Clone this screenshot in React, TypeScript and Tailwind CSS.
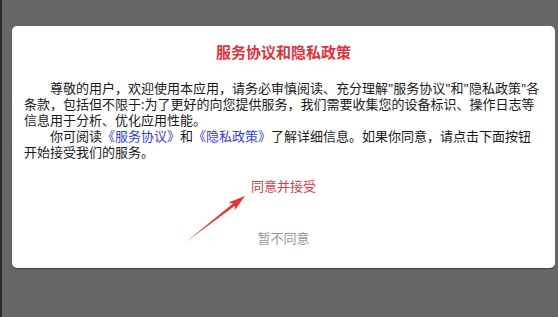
import React from "react";

export default function App() {
  const font = { fontFamily: '"Noto Sans", "Noto Sans CJK SC", sans-serif' };
  return (
    <div
      className="relative w-[558px] h-[317px] bg-[#666666] border-l-2 border-[#2a2a2a] pt-[26px] pl-[10px]"
      style={font}
    >
      <div className="w-[543px] h-[242px] bg-white rounded-[5px] shadow-[0_1px_1px_rgba(0,0,0,0.35)] flex flex-col items-center">
        <div className="pt-[16px] h-[36px] text-[15px] leading-[20px] font-bold text-[#e0323c]">
          服务协议和隐私政策
        </div>
        <div className="self-start mt-[18px] ml-[12px] w-[516px] text-[13px] leading-[16px] text-[#1a1a1a]">
          <p className="indent-[26px]">
            尊敬的用户，欢迎使用本应用，请务必审慎阅读、充分理解"服务协议"和"隐私政策"各条款，包括但不限于:为了更好的向您提供服务，我们需要收集您的设备标识、操作日志等信息用于分析、优化应用性能。
          </p>
          <p className="indent-[26px]">
            你可阅读<span className="text-[#3540d8]">《服务协议》</span>和<span className="text-[#3540d8]">《隐私政策》</span>了解详细信息。如果你同意，请点击下面按钮开始接受我们的服务。
          </p>
        </div>
        <button className="mt-[16px] h-[20px] text-[13px] leading-[20px] text-[#e33a3f]">
          同意并接受
        </button>
        <button className="mt-[32px] h-[20px] text-[13px] leading-[20px] text-[#9a9a9a]">
          暂不同意
        </button>
      </div>
      <svg
        className="absolute left-0 top-0 pointer-events-none"
        width="558"
        height="317"
        viewBox="0 0 558 317"
      >
        <polygon
          points="184,242 232.9,205.8 232.7,210.3 243,196 226.5,202.5 231,203.4"
          fill="#f0302a"
        />
      </svg>
    </div>
  );
}
